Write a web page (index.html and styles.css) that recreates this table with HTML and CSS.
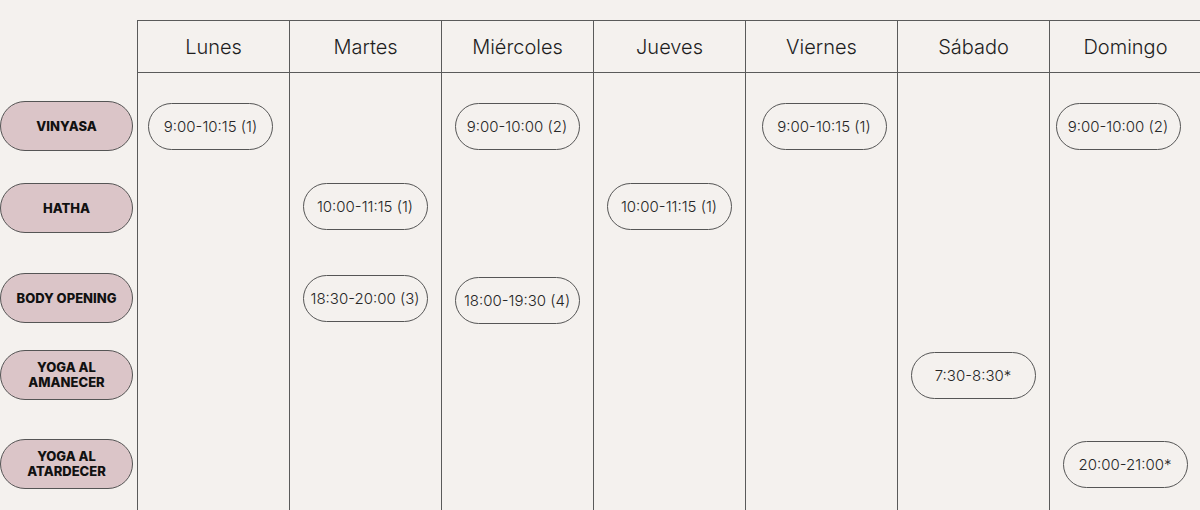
FILE: index.html
```html
<!DOCTYPE html>
<html lang="es">
<head>
    <meta charset="UTF-8">
    <meta name="viewport" content="width=device-width, initial-scale=1.0">
    <title>Horario de Yoga</title>
    <link rel="stylesheet" href="styles.css">
</head>
<body>
    <div class="schedule">
        <!-- Day headers -->
        <div class="day-head d1">Lunes</div>
        <div class="day-head d2">Martes</div>
        <div class="day-head d3">Miércoles</div>
        <div class="day-head d4">Jueves</div>
        <div class="day-head d5">Viernes</div>
        <div class="day-head d6">Sábado</div>
        <div class="day-head d7">Domingo</div>

        <!-- Column lines -->
        <div class="day-col d1"></div>
        <div class="day-col d2"></div>
        <div class="day-col d3"></div>
        <div class="day-col d4"></div>
        <div class="day-col d5"></div>
        <div class="day-col d6"></div>
        <div class="day-col d7"></div>

        <!-- Class labels -->
        <div class="label r1">VINYASA</div>
        <div class="label r2">HATHA</div>
        <div class="label r3">BODY OPENING</div>
        <div class="label r4">YOGA AL<br>AMANECER</div>
        <div class="label r5">YOGA AL<br>ATARDECER</div>

        <!-- Sessions -->
        <div class="slot r1 d1 nudge-left-sm">9:00-10:15 (1)</div>
        <div class="slot r1 d3">9:00-10:00 (2)</div>
        <div class="slot r1 d5 nudge-right">9:00-10:15 (1)</div>
        <div class="slot r1 d7 nudge-left">9:00-10:00 (2)</div>

        <div class="slot r2 d2 nudge-up">10:00-11:15 (1)</div>
        <div class="slot r2 d4 nudge-up">10:00-11:15 (1)</div>

        <div class="slot r3 d2">18:30-20:00 (3)</div>
        <div class="slot r3 d3 nudge-down">18:00-19:30 (4)</div>

        <div class="slot r4 d6">7:30-8:30*</div>

        <div class="slot r5 d7">20:00-21:00*</div>
    </div>
</body>
</html>
```

FILE: styles.css
```css
/* Reset */
* {
    margin: 0;
    padding: 0;
    box-sizing: border-box;
}

body {
    font-family: 'Inter', 'Liberation Sans', sans-serif;
    background-color: #f4f1ee;
    color: #222;
    padding-top: 20px;
    height: 100vh;
    overflow: hidden;
}

/* Grid: label column + 7 days, rows spaced like the printed timetable */
.schedule {
    display: grid;
    grid-template-columns: 137px repeat(7, 152px);
    grid-template-rows: 53px 28px 50px 32px 50px 40px 50px 27px 50px 39px 50px 1fr;
    height: calc(100vh - 20px);
}

/* Day headers */
.day-head {
    grid-row: 1;
    display: flex;
    align-items: center;
    justify-content: center;
    border-top: 1px solid #5a5a5a;
    border-bottom: 1px solid #5a5a5a;
    border-left: 1px solid #5a5a5a;
    font-size: 20px;
    font-weight: 300;
    color: #1e1e1e;
    padding-top: 1px;
}

.day-col {
    grid-row: 2 / -1;
    border-left: 1px solid #5a5a5a;
}

.d1 { grid-column: 2; }
.d2 { grid-column: 3; }
.d3 { grid-column: 4; }
.d4 { grid-column: 5; }
.d5 { grid-column: 6; }
.d6 { grid-column: 7; }
.d7 { grid-column: 8; }

.r1 { grid-row: 3; }
.r2 { grid-row: 5; }
.r3 { grid-row: 7; }
.r4 { grid-row: 9; }
.r5 { grid-row: 11; }

/* Class name pills */
.label {
    grid-column: 1;
    justify-self: start;
    width: 133px;
    height: 50px;
    display: flex;
    align-items: center;
    justify-content: center;
    text-align: center;
    background-color: #dbc5c8;
    border: 1px solid #555;
    border-radius: 25px;
    font-size: 13px;
    font-weight: 800;
    line-height: 15px;
    color: #111;
}

/* Session times */
.slot {
    justify-self: center;
    align-self: center;
    width: 125px;
    height: 47px;
    display: flex;
    align-items: center;
    justify-content: center;
    white-space: nowrap;
    border: 1px solid #555;
    border-radius: 24px;
    font-size: 15px;
    font-weight: 300;
    color: #262626;
}

.nudge-right { margin-left: 6px; }
.nudge-left { margin-right: 14px; }
.nudge-left-sm { margin-right: 5px; }
.nudge-down { margin-top: 4px; }
.nudge-up { margin-bottom: 3px; }
```
